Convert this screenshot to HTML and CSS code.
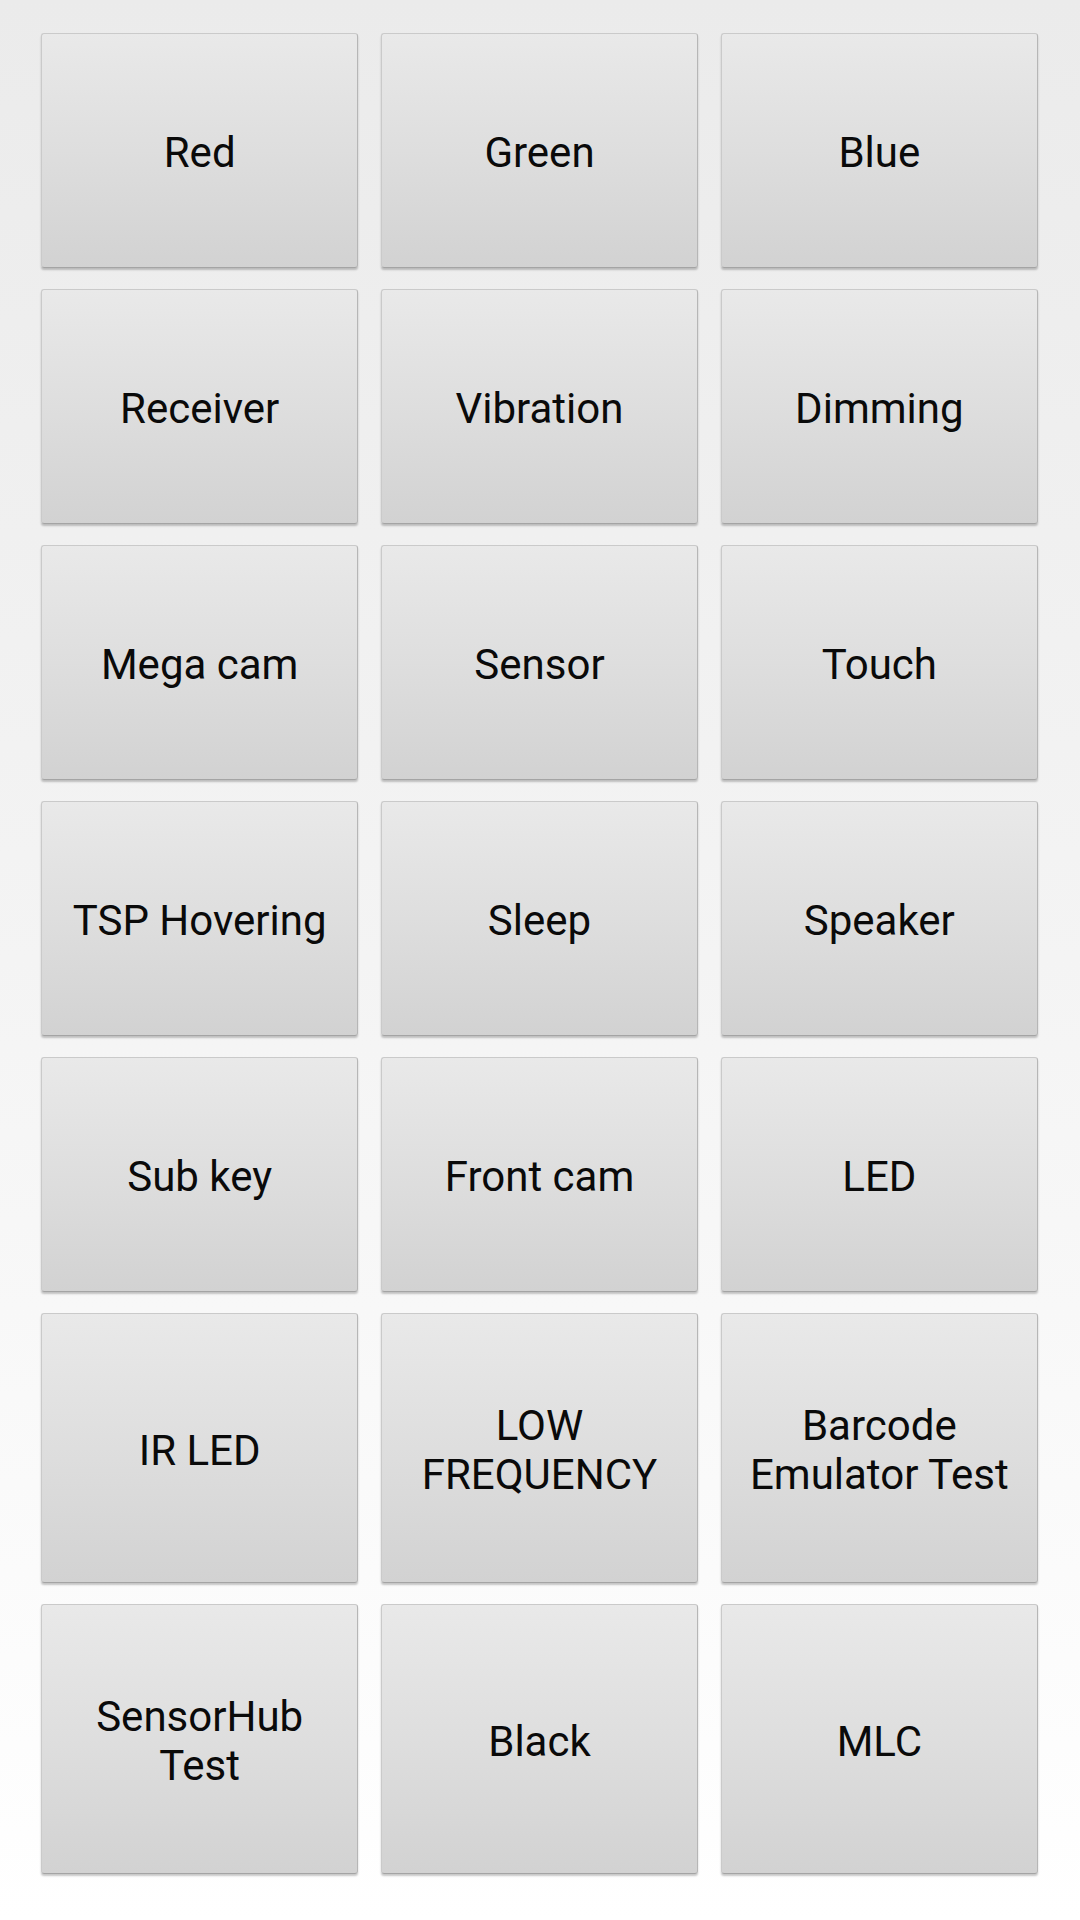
FILE: index.html
```html
<!DOCTYPE html>
<html lang="en">
<head>
  <meta charset="UTF-8">
  <meta name="viewport" content="width=device-width, initial-scale=1.0">
  <title>Test Menu</title>
  <link rel="stylesheet" href="styles.css">
</head>
<body>

<div class="grid">
  <button class="test-btn">Red</button>
  <button class="test-btn">Green</button>
  <button class="test-btn">Blue</button>
  <button class="test-btn">Receiver</button>
  <button class="test-btn">Vibration</button>
  <button class="test-btn">Dimming</button>
  <button class="test-btn">Mega cam</button>
  <button class="test-btn">Sensor</button>
  <button class="test-btn">Touch</button>
  <button class="test-btn">TSP Hovering</button>
  <button class="test-btn">Sleep</button>
  <button class="test-btn">Speaker</button>
  <button class="test-btn">Sub key</button>
  <button class="test-btn">Front cam</button>
  <button class="test-btn">LED</button>
  <button class="test-btn">IR LED</button>
  <button class="test-btn">LOW FREQUENCY</button>
  <button class="test-btn">Barcode Emulator Test</button>
  <button class="test-btn">SensorHub Test</button>
  <button class="test-btn">Black</button>
  <button class="test-btn">MLC</button>
</div>

</body>
</html>
```

FILE: styles.css
```css
* {
  margin: 0;
  padding: 0;
  box-sizing: border-box;
}

html, body {
  height: 1920px;
}

body {
  background: linear-gradient(to bottom, #ebebeb 0%, #f4f4f4 50%, #ffffff 100%);
  font-family: Roboto, 'Noto Sans', sans-serif;
}

.grid {
  display: grid;
  grid-template-columns: repeat(3, 1fr);
  column-gap: 22.5px;
  row-gap: 21px;
  padding: 33px 42px 0 41px;
}

.test-btn {
  min-height: 235px;
  padding: 87px 28px 83px;
  font-family: Roboto, 'Noto Sans', sans-serif;
  font-size: 42px;
  line-height: 49px;
  color: #0a0a0a;
  text-align: center;
  background: linear-gradient(to bottom, #e9e9e9 0%, #dedede 50%, #d2d2d2 100%);
  border: 1px solid #cacaca;
  border-bottom-color: #a4a4a4;
  border-right-color: #b6b6b6;
  border-radius: 3px;
  box-shadow: 0 2px 2px rgba(0, 0, 0, 0.22);
  cursor: pointer;
}
```
